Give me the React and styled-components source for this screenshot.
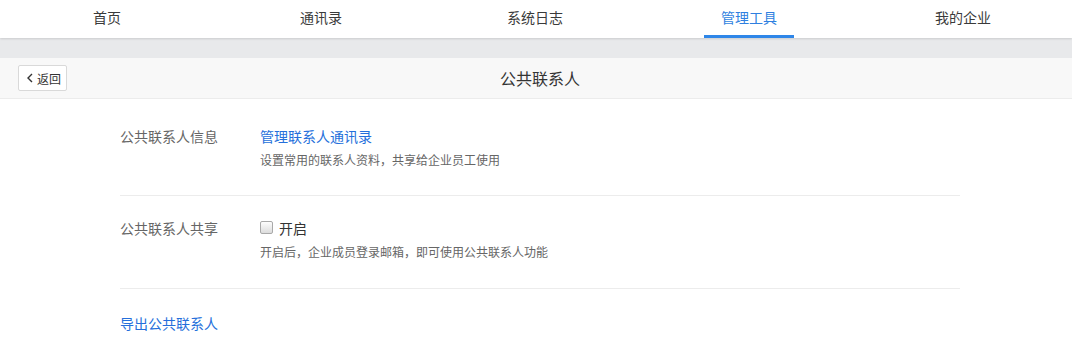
import React from 'react';
import styled, { createGlobalStyle } from 'styled-components';

const GlobalStyle = createGlobalStyle`
  html, body {
    margin: 0;
    padding: 0;
    background: #fff;
    font-family: "Liberation Sans", "Noto Sans CJK SC", sans-serif;
    color: #333;
  }
`;

const tabs = ['首页', '通讯录', '系统日志', '管理工具', '我的企业'];

export default function App() {
  return (
    <Page>
      <GlobalStyle />
      <TopNav>
        {tabs.map(t => (
          <Tab key={t} active={t === '管理工具'}>
            <span>{t}</span>
          </Tab>
        ))}
      </TopNav>
      <Band />
      <Header>
        <BackButton>
          <svg width="6" height="10" viewBox="0 0 6 10">
            <path d="M5 1 L1 5 L5 9" fill="none" stroke="#333" strokeWidth="1.4" />
          </svg>
          返回
        </BackButton>
        <Title>公共联系人</Title>
        <span />
      </Header>
      <Content>
        <Row>
          <Label>公共联系人信息</Label>
          <Body>
            <Link>管理联系人通讯录</Link>
            <Desc>设置常用的联系人资料，共享给企业员工使用</Desc>
          </Body>
        </Row>
        <Row extra={1}>
          <Label>公共联系人共享</Label>
          <Body>
            <CheckLine>
              <Box />
              开启
            </CheckLine>
            <Desc>开启后，企业成员登录邮箱，即可使用公共联系人功能</Desc>
          </Body>
        </Row>
        <ExportRow>
          <Link>导出公共联系人</Link>
        </ExportRow>
      </Content>
    </Page>
  );
}

const Page = styled.div`
  width: 1072px;
  height: 349px;
  overflow: hidden;
`;

const TopNav = styled.nav`
  display: grid;
  grid-template-columns: repeat(5, 1fr);
  height: 38px;
  padding-right: 2px;
  background: #fff;
  position: relative;
  z-index: 1;
  box-shadow: 0 1px 2px rgba(0, 0, 0, 0.12);
`;

const Tab = styled.div`
  display: flex;
  justify-content: center;
  font-size: 14px;
  line-height: 37px;
  color: ${p => (p.active ? '#2f7fe0' : '#3a3a3a')};

  span {
    display: block;
    width: 90px;
    text-align: center;
    height: 35px;
    border-bottom: 3px solid ${p => (p.active ? '#2e86e8' : 'transparent')};
  }
`;

const Band = styled.div`
  height: 20px;
  background: #e8e9eb;
`;

const Header = styled.div`
  display: grid;
  grid-template-columns: 1fr auto 1fr;
  align-items: center;
  height: 40px;
  padding: 0 10px 0 18px;
  background: #f8f8f8;
  border-bottom: 1px solid #ececec;
`;

const BackButton = styled.button`
  justify-self: start;
  display: flex;
  align-items: center;
  gap: 4px;
  width: 49px;
  height: 26px;
  padding: 0 0 0 8px;
  background: #fff;
  border: 1px solid #d9d9d9;
  border-radius: 2px;
  font-family: inherit;
  font-size: 12px;
  color: #333;
`;

const Title = styled.div`
  font-size: 16px;
  color: #333;
`;

const Content = styled.div`
  width: 840px;
  margin-left: 120px;
  padding-top: 5px;
`;

const Row = styled.div`
  display: flex;
  padding: 23px 0 ${p => 24 + (p.extra || 0)}px;
  border-bottom: 1px solid #ececec;
`;

const Label = styled.div`
  width: 140px;
  font-size: 14px;
  line-height: 20px;
  color: #666;
`;

const Body = styled.div`
  display: flex;
  flex-direction: column;
`;

const Link = styled.a`
  font-size: 14px;
  line-height: 20px;
  color: #256fdb;
  cursor: pointer;
`;

const Desc = styled.div`
  margin-top: 4px;
  font-size: 12px;
  line-height: 20px;
  color: #666;
`;

const CheckLine = styled.label`
  display: flex;
  align-items: center;
  gap: 6px;
  font-size: 14px;
  line-height: 20px;
  color: #333;
`;

const Box = styled.span`
  width: 11px;
  height: 11px;
  margin-top: -3px;
  border: 1px solid #a9a9a9;
  border-radius: 2px;
  background: linear-gradient(#fdfdfd, #dcdcdc);
`;

const ExportRow = styled.div`
  padding-top: 25px;
`;
